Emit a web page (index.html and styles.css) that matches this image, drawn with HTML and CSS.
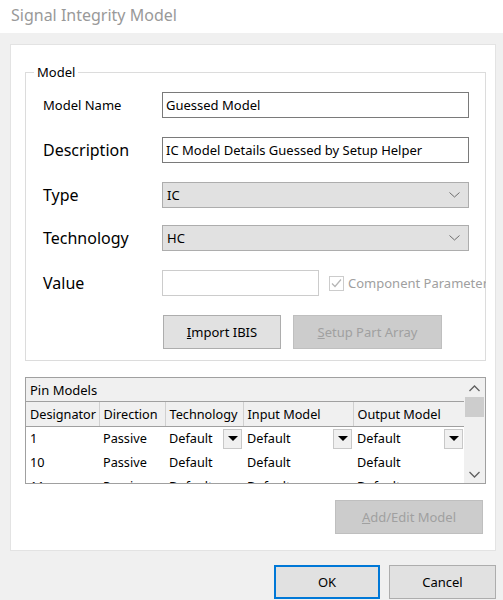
FILE: index.html
```html
<!DOCTYPE html>
<html>
    <head>
        <meta charset="utf-8">
        <title>Signal Integrity Model</title>
        <link rel="stylesheet" href="styles.css">
    </head>
    <body>
        <div class="titlebar">Signal Integrity Model</div>
        <div class="dialog">
            <div class="panel">
                <fieldset class="group">
                    <legend>Model</legend>
                    <div class="row row-name">
                        <span class="label label-small">Model Name</span>
                        <div class="textbox">Guessed Model</div>
                    </div>
                    <div class="row row-desc">
                        <span class="label">Description</span>
                        <div class="textbox">IC Model Details Guessed by Setup Helper</div>
                    </div>
                    <div class="row row-type">
                        <span class="label">Type</span>
                        <div class="combo">
                            <span>IC</span>
                            <svg class="chev" width="11" height="6" viewBox="0 0 11 6"><path d="M0.5 0.5 L5.5 5 L10.5 0.5" fill="none" stroke="#6d6d6d" stroke-width="1"/></svg>
                        </div>
                    </div>
                    <div class="row row-tech">
                        <span class="label">Technology</span>
                        <div class="combo">
                            <span>HC</span>
                            <svg class="chev" width="11" height="6" viewBox="0 0 11 6"><path d="M0.5 0.5 L5.5 5 L10.5 0.5" fill="none" stroke="#6d6d6d" stroke-width="1"/></svg>
                        </div>
                    </div>
                    <div class="row row-value">
                        <span class="label">Value</span>
                        <div class="textbox textbox-value"></div>
                        <div class="checkwrap">
                            <span class="checkbox">
                                <svg width="13" height="13" viewBox="0 0 13 13"><path d="M2 6.5 L5 9.5 L11 2.5" fill="none" stroke="#b5b5b5" stroke-width="1.2"/></svg>
                            </span>
                            <span class="checklabel">Component Parameter</span>
                        </div>
                    </div>
                    <div class="row row-buttons">
                        <button class="btn btn-import"><u>I</u>mport IBIS</button>
                        <button class="btn btn-disabled btn-setup"><u>S</u>etup Part Array</button>
                    </div>
                </fieldset>

                <div class="grid">
                    <div class="grid-main">
                        <div class="grid-title">Pin Models</div>
                        <table class="pins">
                            <thead>
                                <tr>
                                    <th class="c-des">Designator</th>
                                    <th class="c-dir">Direction</th>
                                    <th class="c-tech">Technology</th>
                                    <th class="c-in">Input Model</th>
                                    <th class="c-out">Output Model</th>
                                </tr>
                            </thead>
                            <tbody>
                                <tr>
                                    <td>1</td>
                                    <td>Passive</td>
                                    <td class="dd">Default<span class="ddbtn"><i></i></span></td>
                                    <td class="dd">Default<span class="ddbtn"><i></i></span></td>
                                    <td class="dd">Default<span class="ddbtn"><i></i></span></td>
                                </tr>
                                <tr>
                                    <td>10</td>
                                    <td>Passive</td>
                                    <td>Default</td>
                                    <td>Default</td>
                                    <td>Default</td>
                                </tr>
                                <tr>
                                    <td>11</td>
                                    <td>Passive</td>
                                    <td>Default</td>
                                    <td>Default</td>
                                    <td>Default</td>
                                </tr>
                            </tbody>
                        </table>
                    </div>
                    <div class="vscroll">
                        <svg width="11" height="7" viewBox="0 0 11 7"><path d="M0.5 6 L5.5 1 L10.5 6" fill="none" stroke="#606060" stroke-width="1.3"/></svg>
                        <div class="thumb"></div>
                        <div class="track"></div>
                        <svg width="11" height="7" viewBox="0 0 11 7"><path d="M0.5 1 L5.5 6 L10.5 1" fill="none" stroke="#606060" stroke-width="1.3"/></svg>
                    </div>
                </div>

                <div class="panel-foot">
                    <button class="btn btn-disabled btn-edit"><u>A</u>dd/Edit Model</button>
                </div>
            </div>
            <div class="actions">
                <button class="btn btn-ok">OK</button>
                <button class="btn btn-cancel">Cancel</button>
            </div>
        </div>
    </body>
</html>
```

FILE: styles.css
```css
*{
    box-sizing: border-box;
}
body{
    margin: 0;
    background-color: #f0f0f0;
    font-family: "Noto Sans", "Open Sans", sans-serif;
    font-size: 13px;
    color: #000;
    overflow: hidden;
}
.titlebar{
    height: 33px;
    background-color: #fff;
    color: #999;
    font-size: 16px;
    padding: 4px 0 0 11px;
}
.dialog{
    padding: 11px 7px 0 10px;
}
.panel{
    background-color: #fff;
    border: 1px solid #e3e3e3;
    height: 507px;
    padding: 18px 9px 0 14px;
}

/* model group */
.group{
    margin: 0;
    border: 1px solid #dcdcdc;
    padding: 11px 16px 11px 17px;
    min-width: 0;
}
.group legend{
    font-size: 13px;
    padding: 0 3px;
    margin-left: -9px;
}
.row{
    display: flex;
    align-items: center;
    height: 26px;
}
.row-desc, .row-type, .row-value{ margin-top: 19px; }
.row-tech{ margin-top: 17px; }
.row-buttons{
    margin-top: 19px;
    height: 34px;
    padding-left: 120px;
}
.label{
    width: 119px;
    flex: none;
    font-size: 16px;
}
.label-small{ font-size: 13px; }
.textbox{
    flex: 1;
    height: 26px;
    border: 1px solid #7a7a7a;
    padding: 3px 3px 0;
    font-size: 13px;
    white-space: nowrap;
}
.textbox-value{
    flex: none;
    width: 157px;
    border-color: #cccccc;
}
.combo{
    flex: 1;
    height: 26px;
    border: 1px solid #adadad;
    background-color: #e1e1e1;
    display: flex;
    align-items: center;
    justify-content: space-between;
    padding: 0 8px 0 4px;
    font-size: 13px;
}
.checkwrap{
    flex: 1;
    display: flex;
    align-items: center;
    margin-left: 10px;
    margin-right: -17px;
    overflow: hidden;
    white-space: nowrap;
}
.checkbox{
    width: 15px;
    height: 15px;
    border: 1px solid #cccccc;
    display: flex;
    align-items: center;
    justify-content: center;
    flex: none;
}
.checklabel{
    color: #a0a0a0;
    font-size: 13px;
    margin-left: 4px;
}

/* buttons */
.btn{
    font-family: inherit;
    font-size: 13px;
    height: 34px;
    border: 1px solid #adadad;
    background-color: #e1e1e1;
    color: #000;
    padding: 0;
}
.btn-disabled{
    background-color: #cccccc;
    border-color: #bfbfbf;
    color: #a0a0a0;
}
.btn-import{ width: 118px; }
.btn-setup{ width: 149px; margin-left: 12px; }
.btn-edit{ width: 148px; }

/* pin models grid */
.grid{
    margin-top: 16px;
    height: 107px;
    border: 1px solid #a0a0a0;
    display: flex;
    overflow: hidden;
}
.grid-main{
    flex: 1;
    overflow: hidden;
}
.grid-title{
    height: 24px;
    background-color: #f0f0f0;
    border-bottom: 1px solid #a0a0a0;
    padding: 3px 4px 0;
    font-size: 13px;
}
.pins{
    border-collapse: collapse;
    width: 438px;
    table-layout: fixed;
    font-size: 12.7px;
}
.pins th{
    font-weight: normal;
    text-align: left;
    height: 24px;
    padding: 0 3px 0 4px;
    background-color: #f0f0f0;
    border-right: 1px solid #d0d0d0;
    border-bottom: 1px solid #a0a0a0;
    white-space: nowrap;
}
.pins td{
    height: 24px;
    padding: 0 4px;
    white-space: nowrap;
}
.c-des{ width: 73px; }
.c-dir{ width: 66px; }
.c-tech{ width: 78px; }
.c-in{ width: 110px; }
.c-out{ width: 111px; }
.dd{
    position: relative;
}
.ddbtn{
    position: absolute;
    right: 1px;
    top: 2px;
    width: 19px;
    height: 20px;
    border: 1px solid #c8c8c8;
    background-color: #f0f0f0;
    display: flex;
    align-items: center;
    justify-content: center;
}
.ddbtn i{
    width: 0;
    height: 0;
    border-left: 5px solid transparent;
    border-right: 5px solid transparent;
    border-top: 5px solid #000;
}
.vscroll{
    width: 21px;
    flex: none;
    background-color: #f0f0f0;
    display: flex;
    flex-direction: column;
    align-items: center;
    padding: 7px 0 5px;
}
.thumb{
    width: 19px;
    height: 20px;
    margin-top: 5px;
    background-color: #cdcdcd;
}
.track{ flex: 1; }

.panel-foot{
    display: flex;
    justify-content: flex-end;
    padding-right: 3px;
    margin-top: 16px;
}

/* dialog buttons */
.actions{
    display: flex;
    justify-content: flex-end;
    gap: 9px;
    margin-top: 14px;
}
.btn-ok{
    width: 106px;
    border: 2px solid #0078d7;
}
.btn-cancel{
    width: 107px;
}
```
